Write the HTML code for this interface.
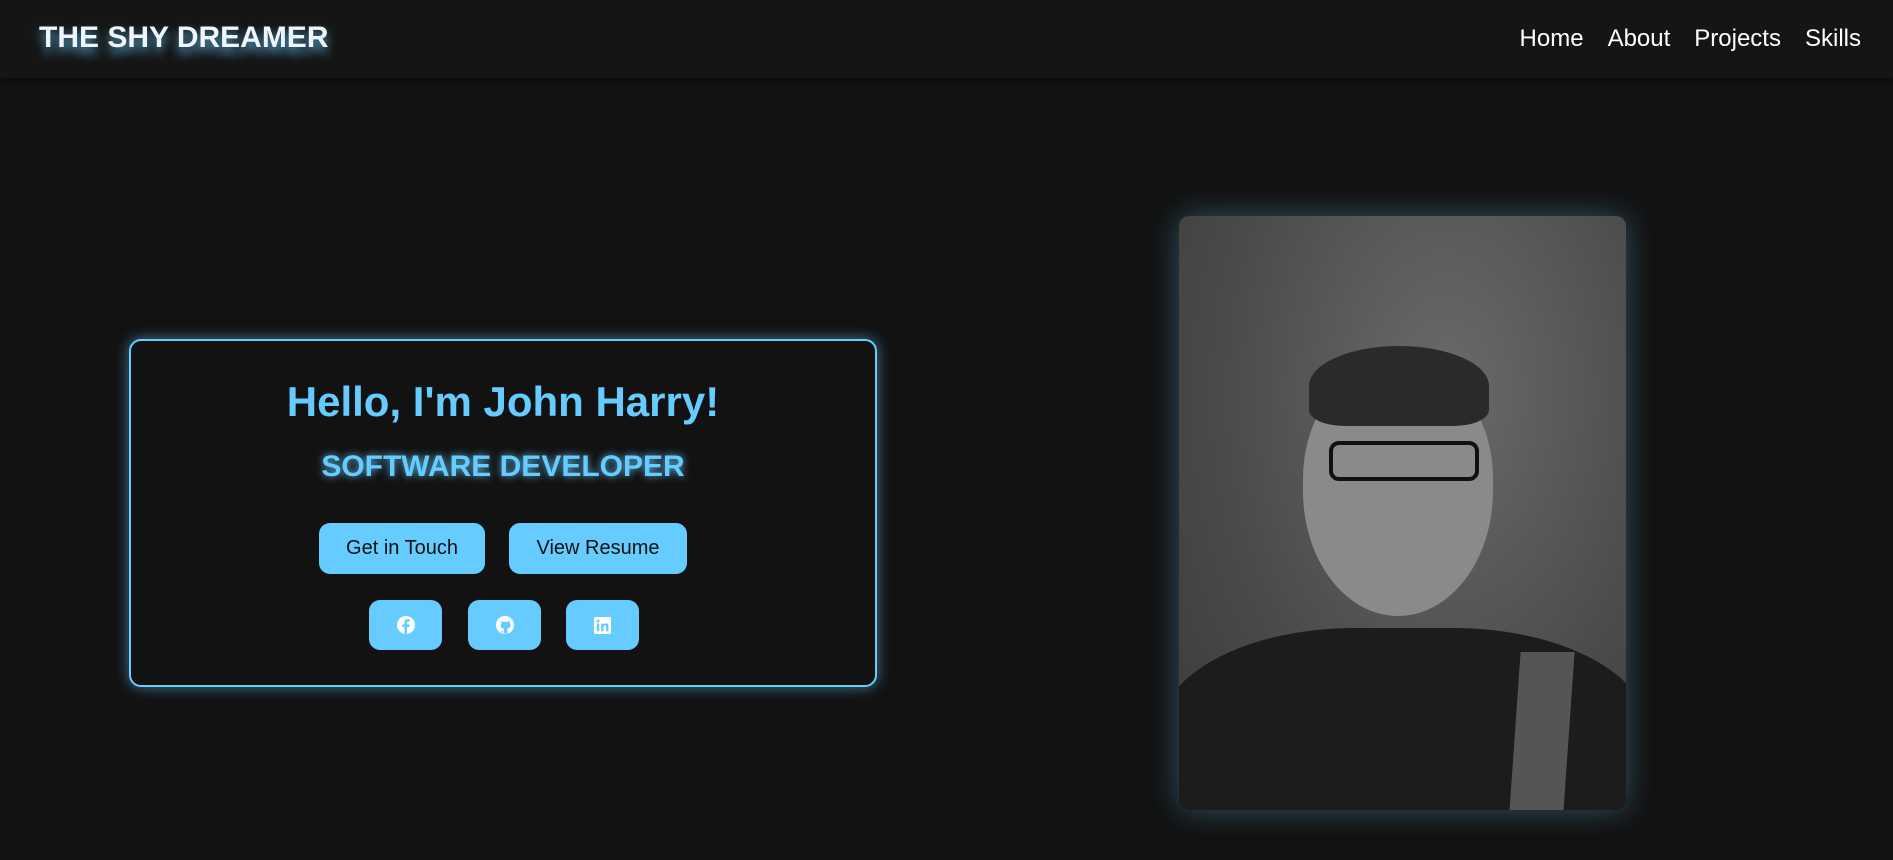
<!DOCTYPE html>
<html><head><meta charset="utf-8"><style>
*{margin:0;padding:0;box-sizing:border-box}
body{width:1893px;height:860px;background:#121212;font-family:"Liberation Sans",Arial,sans-serif;overflow:hidden;position:relative}
nav{position:absolute;left:0;top:0;width:1893px;height:78px;background:#151515;box-shadow:0 2px 8px rgba(0,0,0,.5)}
.logo{position:absolute;left:39px;top:21px;font-size:30px;font-weight:bold;color:#eef6fb;text-shadow:0 6px 10px rgba(102,204,255,.8)}
.links{position:absolute;right:32px;top:25px;font-size:24px;color:#fff;display:flex;gap:24px}
.card{position:absolute;left:129px;top:339px;width:748px;height:348px;border:2px solid #66ccff;border-radius:12px;box-shadow:0 0 14px rgba(102,204,255,.55);text-align:center;background:#121212}
h1{position:absolute;left:0;right:0;top:37px;font-size:42px;color:#66ccff;font-weight:bold}
h2{position:absolute;left:0;right:0;top:109px;font-size:30px;color:#66ccff;font-weight:bold;text-shadow:0 0 8px rgba(102,204,255,.9)}
.btn{position:absolute;top:182px;height:51px;background:#66ccff;border-radius:11px;color:#111;font-size:20px;line-height:51px;text-align:center}
.soc{position:absolute;top:259px;width:73px;height:50px;background:#66ccff;border-radius:11px;display:flex;align-items:center;justify-content:center}
.photo{position:absolute;left:1179px;top:216px;width:447px;height:594px;border-radius:10px;overflow:hidden;box-shadow:0 0 30px rgba(102,204,255,.35);background:radial-gradient(ellipse at 60% 30%,#6a6a6a,#4a4a4a 60%,#3a3a3a)}
</style></head><body>
<nav><div class="logo">THE SHY DREAMER</div><div class="links"><span>Home</span><span>About</span><span>Projects</span><span>Skills</span></div></nav>
<div class="card">
<h1>Hello, I'm John Harry!</h1>
<h2>SOFTWARE DEVELOPER</h2>
<div class="btn" style="left:188px;width:166px">Get in Touch</div>
<div class="btn" style="left:378px;width:178px">View Resume</div>
<div class="soc" style="left:238px"><svg width="20" height="20" viewBox="0 0 20 20"><circle cx="10" cy="10" r="9" fill="#fff"/><path d="M11 19V12h2.3l.4-2.6H11V7.8c0-.8.3-1.3 1.4-1.3h1.4V4.2c-.3 0-1.1-.1-2-.1-2 0-3.3 1.2-3.3 3.4v1.9H6.3V12h2.2v7z" fill="#66ccff"/></svg></div>
<div class="soc" style="left:337px"><svg width="20" height="20" viewBox="0 0 20 20"><circle cx="10" cy="10" r="9" fill="#fff"/><path d="M7.5 18.5v-2.5c-2 .4-2.5-1-2.5-1M12.5 18.5v-3c0-1 0-1.3-.5-1.8 2-.2 3.5-1 3.5-3.5 0-.8-.3-1.5-.8-2 .1-.4.2-1.2-.1-2-1 0-1.7.6-2 .8a7 7 0 00-4 0c-.3-.2-1-.8-2-.8-.3.8-.2 1.6-.1 2-.5.5-.8 1.2-.8 2 0 2.5 1.5 3.3 3.5 3.5-.5.5-.5 1-.5 1.8v3" fill="#66ccff"/></svg></div>
<div class="soc" style="left:435px"><svg width="19" height="19" viewBox="0 0 20 20"><rect x="1" y="1" width="18" height="18" rx="2" fill="#fff"/><rect x="4" y="8" width="2.6" height="8" fill="#66ccff"/><circle cx="5.3" cy="5.3" r="1.5" fill="#66ccff"/><path d="M8.6 8h2.5v1.2c.5-.8 1.3-1.4 2.6-1.4 2 0 2.6 1.3 2.6 3.2V16h-2.6v-4.5c0-1-.3-1.6-1.2-1.6s-1.4.7-1.4 1.6V16H8.6z" fill="#66ccff"/></svg></div>
</div>
<div class="photo">
<div style="position:absolute;left:124px;top:150px;width:190px;height:250px;border-radius:45% 45% 50% 50%;background:#8a8a8a"></div>
<div style="position:absolute;left:130px;top:130px;width:180px;height:80px;border-radius:50% 50% 20% 20%;background:#2a2a2a"></div>
<div style="position:absolute;left:150px;top:225px;width:150px;height:40px;border:4px solid #111;border-radius:10px"></div>
<div style="position:absolute;left:-20px;top:412px;width:490px;height:260px;border-radius:40% 40% 0 0;background:#1c1c1c"></div>
<div style="position:absolute;left:336px;top:436px;width:54px;height:160px;background:#555;transform:skewX(-4deg)"></div>
</div>
</body></html>
